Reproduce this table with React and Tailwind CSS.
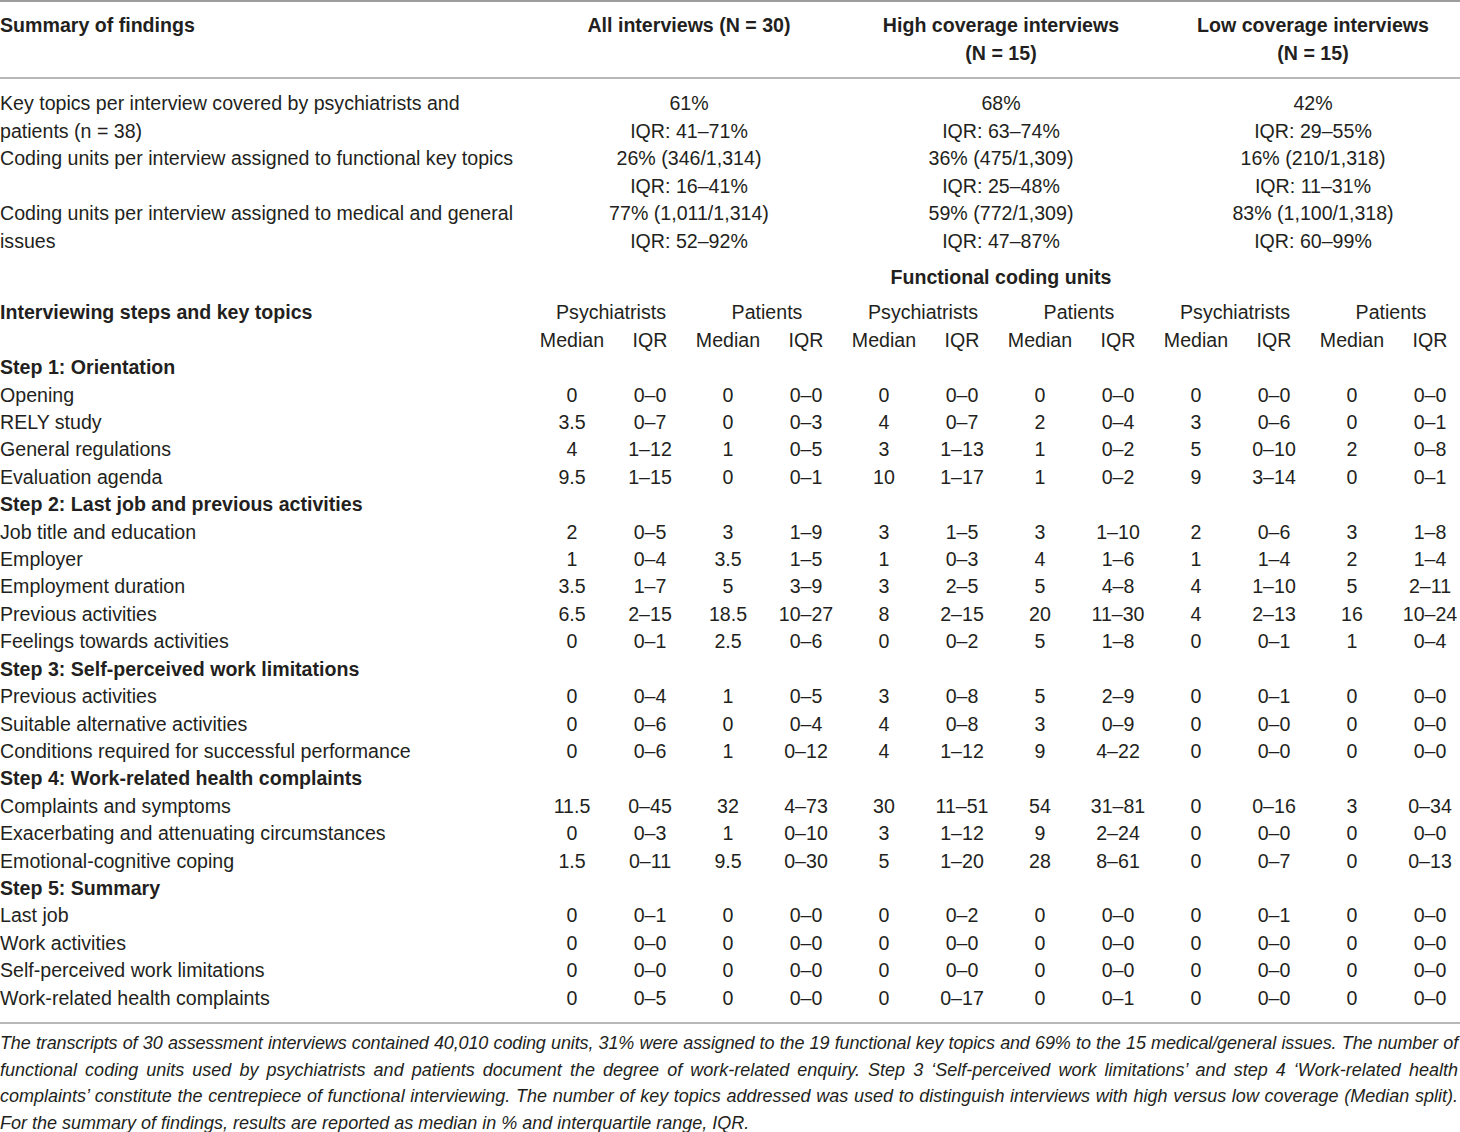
import React from "react";

const rows = [
  { step: "Step 1: Orientation" },
  { label: "Opening", v: ["0", "0–0", "0", "0–0", "0", "0–0", "0", "0–0", "0", "0–0", "0", "0–0"] },
  { label: "RELY study", v: ["3.5", "0–7", "0", "0–3", "4", "0–7", "2", "0–4", "3", "0–6", "0", "0–1"] },
  { label: "General regulations", v: ["4", "1–12", "1", "0–5", "3", "1–13", "1", "0–2", "5", "0–10", "2", "0–8"] },
  { label: "Evaluation agenda", v: ["9.5", "1–15", "0", "0–1", "10", "1–17", "1", "0–2", "9", "3–14", "0", "0–1"] },
  { step: "Step 2: Last job and previous activities" },
  { label: "Job title and education", v: ["2", "0–5", "3", "1–9", "3", "1–5", "3", "1–10", "2", "0–6", "3", "1–8"] },
  { label: "Employer", v: ["1", "0–4", "3.5", "1–5", "1", "0–3", "4", "1–6", "1", "1–4", "2", "1–4"] },
  { label: "Employment duration", v: ["3.5", "1–7", "5", "3–9", "3", "2–5", "5", "4–8", "4", "1–10", "5", "2–11"] },
  { label: "Previous activities", v: ["6.5", "2–15", "18.5", "10–27", "8", "2–15", "20", "11–30", "4", "2–13", "16", "10–24"] },
  { label: "Feelings towards activities", v: ["0", "0–1", "2.5", "0–6", "0", "0–2", "5", "1–8", "0", "0–1", "1", "0–4"] },
  { step: "Step 3: Self-perceived work limitations" },
  { label: "Previous activities", v: ["0", "0–4", "1", "0–5", "3", "0–8", "5", "2–9", "0", "0–1", "0", "0–0"] },
  { label: "Suitable alternative activities", v: ["0", "0–6", "0", "0–4", "4", "0–8", "3", "0–9", "0", "0–0", "0", "0–0"] },
  { label: "Conditions required for successful performance", v: ["0", "0–6", "1", "0–12", "4", "1–12", "9", "4–22", "0", "0–0", "0", "0–0"] },
  { step: "Step 4: Work-related health complaints" },
  { label: "Complaints and symptoms", v: ["11.5", "0–45", "32", "4–73", "30", "11–51", "54", "31–81", "0", "0–16", "3", "0–34"] },
  { label: "Exacerbating and attenuating circumstances", v: ["0", "0–3", "1", "0–10", "3", "1–12", "9", "2–24", "0", "0–0", "0", "0–0"] },
  { label: "Emotional-cognitive coping", v: ["1.5", "0–11", "9.5", "0–30", "5", "1–20", "28", "8–61", "0", "0–7", "0", "0–13"] },
  { step: "Step 5: Summary" },
  { label: "Last job", v: ["0", "0–1", "0", "0–0", "0", "0–2", "0", "0–0", "0", "0–1", "0", "0–0"] },
  { label: "Work activities", v: ["0", "0–0", "0", "0–0", "0", "0–0", "0", "0–0", "0", "0–0", "0", "0–0"] },
  { label: "Self-perceived work limitations", v: ["0", "0–0", "0", "0–0", "0", "0–0", "0", "0–0", "0", "0–0", "0", "0–0"] },
  { label: "Work-related health complaints", v: ["0", "0–5", "0", "0–0", "0", "0–17", "0", "0–1", "0", "0–0", "0", "0–0"] },
];

const summary = [
  {
    label: ["Key topics per interview covered by psychiatrists and", "patients (n = 38)"],
    v: [["61%", "IQR: 41–71%"], ["68%", "IQR: 63–74%"], ["42%", "IQR: 29–55%"]],
  },
  {
    label: ["Coding units per interview assigned to functional key topics"],
    v: [["26% (346/1,314)", "IQR: 16–41%"], ["36% (475/1,309)", "IQR: 25–48%"], ["16% (210/1,318)", "IQR: 11–31%"]],
  },
  {
    label: ["Coding units per interview assigned to medical and general", "issues"],
    v: [["77% (1,011/1,314)", "IQR: 52–92%"], ["59% (772/1,309)", "IQR: 47–87%"], ["83% (1,100/1,318)", "IQR: 60–99%"]],
  },
];

export default function App() {
  return (
    <div className="w-[1460px] h-[1132px] overflow-hidden bg-white text-[#231f20] font-['Liberation_Sans',Arial,sans-serif] text-[19.6px] leading-[27.4px]">
      <div className="w-[1460px]">
        {/* header */}
        <div className="border-t-2 border-[#9d9d9d] border-b-2 border-b-[#b8b8b8] pt-[10px] pb-[10px] font-bold">
          <div className="grid grid-cols-[533px_312px_312px_312px] w-[1469px] leading-[27.5px]">
            <div className="whitespace-nowrap">Summary of findings</div>
            <div className="text-center whitespace-nowrap">All interviews (N = 30)</div>
            <div className="text-center whitespace-nowrap">
              High coverage interviews
              <br />
              (N = 15)
            </div>
            <div className="text-center whitespace-nowrap">
              Low coverage interviews
              <br />
              (N = 15)
            </div>
          </div>
        </div>

        {/* summary body */}
        <div className="pt-[11px] w-[1469px]">
          {summary.map((r, i) => (
            <div key={i} className="grid grid-cols-[533px_312px_312px_312px] leading-[27.5px]">
              <div className="whitespace-nowrap">
                {r.label.map((l, j) => (
                  <div key={j}>{l}</div>
                ))}
              </div>
              {r.v.map((c, j) => (
                <div key={j} className="text-center whitespace-nowrap">
                  <div>{c[0]}</div>
                  <div>{c[1]}</div>
                </div>
              ))}
            </div>
          ))}
        </div>

        {/* functional coding units */}
        <div className="grid grid-cols-[533px_936px] w-[1469px] pt-[9px] pb-[8px]">
          <div />
          <div className="text-center font-bold">Functional coding units</div>
        </div>

        {/* group header */}
        <div className="grid grid-cols-[533px_repeat(6,156px)] w-[1469px]">
          <div className="font-bold whitespace-nowrap">Interviewing steps and key topics</div>
          {["Psychiatrists", "Patients", "Psychiatrists", "Patients", "Psychiatrists", "Patients"].map((g, i) => (
            <div key={i} className="text-center">{g}</div>
          ))}
        </div>
        <div className="grid grid-cols-[533px_repeat(12,78px)] w-[1469px]">
          <div />
          {Array.from({ length: 6 }).map((_, i) => (
            <React.Fragment key={i}>
              <div className="text-center">Median</div>
              <div className="text-center">IQR</div>
            </React.Fragment>
          ))}
        </div>

        {/* data rows */}
        <div className="pb-[10px] border-b-2 border-[#b8b8b8] w-[1460px]">
          {rows.map((r, i) =>
            r.step ? (
              <div key={i} className="font-bold whitespace-nowrap">{r.step}</div>
            ) : (
              <div key={i} className="grid grid-cols-[533px_repeat(12,78px)] w-[1469px]">
                <div className="whitespace-nowrap">{r.label}</div>
                {r.v.map((c, j) => (
                  <div key={j} className="text-center whitespace-nowrap">{c}</div>
                ))}
              </div>
            )
          )}
        </div>

        {/* footer */}
        <div className="pt-[6px] w-[1458px] italic text-[18px] leading-[26.6px]">
          <div className="text-justify [text-align-last:justify] whitespace-nowrap tracking-[-0.14px]">
            The transcripts of 30 assessment interviews contained 40,010 coding units, 31% were assigned to the 19 functional key topics and 69% to the 15 medical/general issues. The number of
          </div>
          <div className="text-justify [text-align-last:justify] whitespace-nowrap">
            functional coding units used by psychiatrists and patients document the degree of work-related enquiry. Step 3 ‘Self-perceived work limitations’ and step 4 ‘Work-related health
          </div>
          <div className="text-justify [text-align-last:justify] whitespace-nowrap">
            complaints’ constitute the centrepiece of functional interviewing. The number of key topics addressed was used to distinguish interviews with high versus low coverage (Median split).
          </div>
          <div className="whitespace-nowrap">
            For the summary of findings, results are reported as median in % and interquartile range, IQR.
          </div>
        </div>
      </div>
    </div>
  );
}
